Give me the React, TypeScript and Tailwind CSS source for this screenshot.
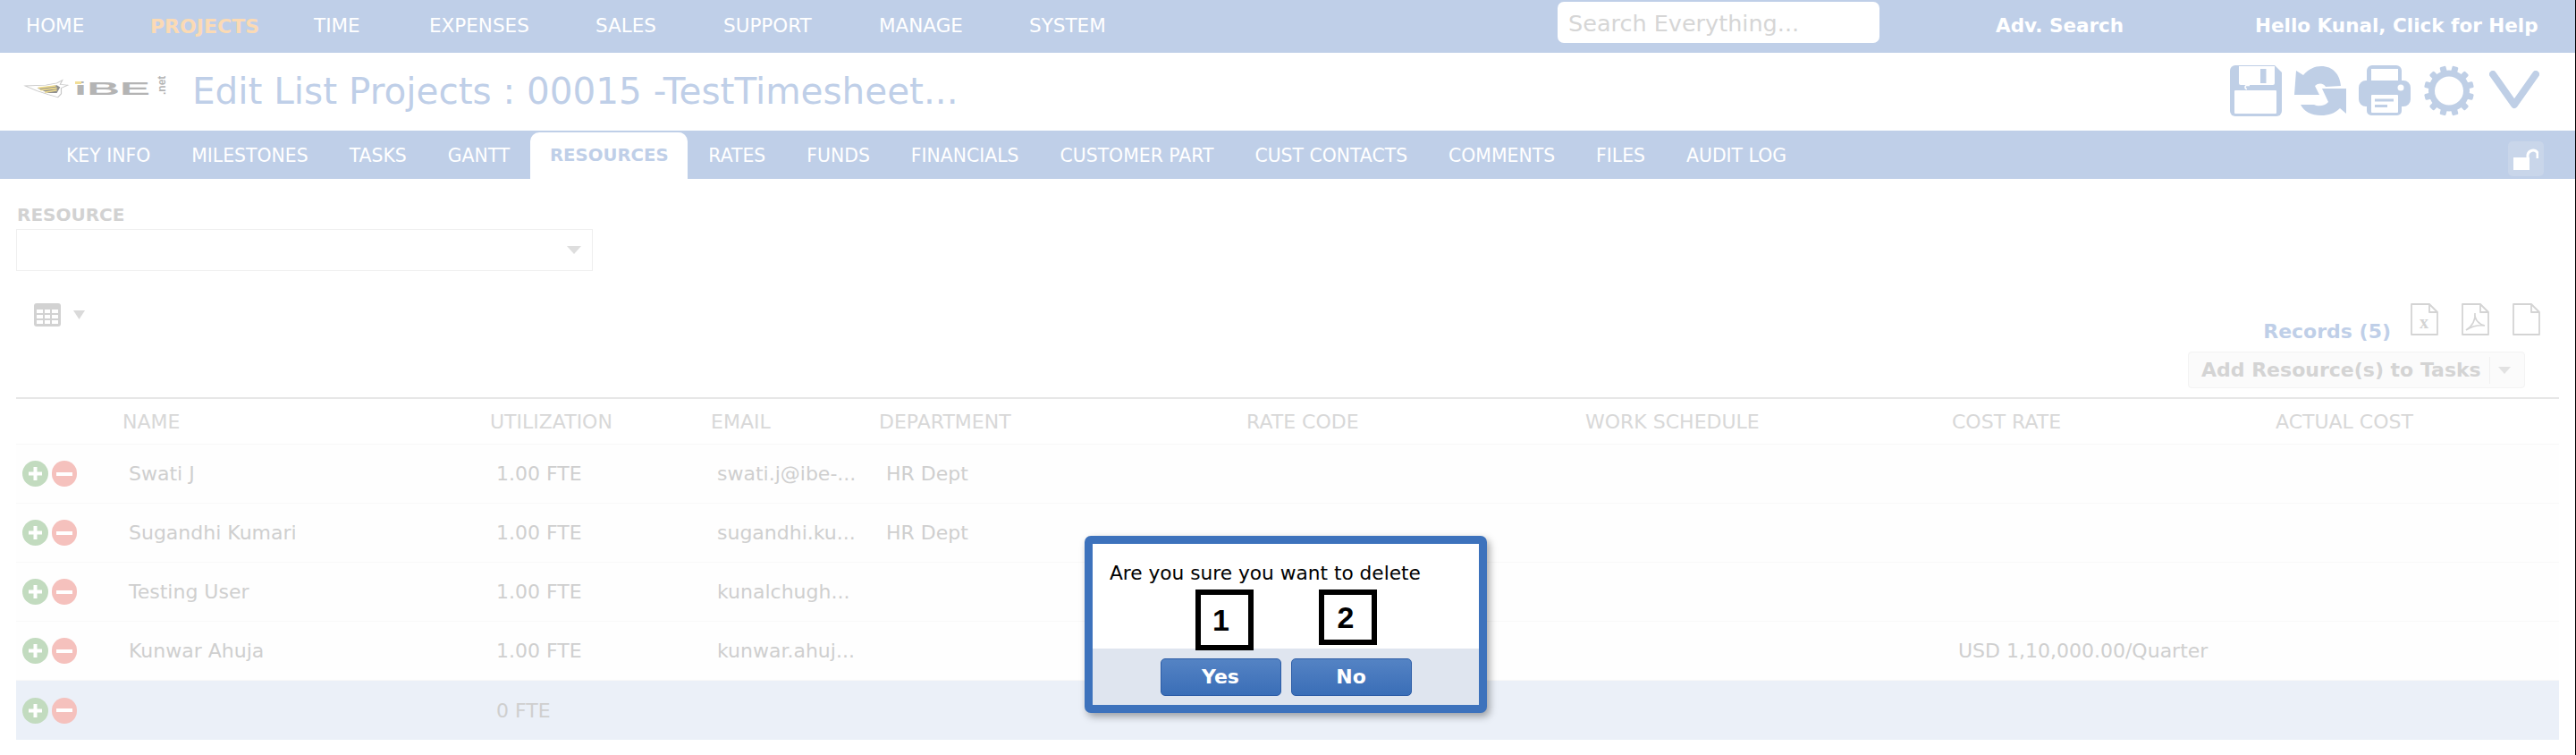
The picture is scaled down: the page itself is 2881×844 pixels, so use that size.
const navItems = [
  { label: "HOME", width: "w-[139px]" },
  { label: "PROJECTS", width: "w-[183px]", active: true },
  { label: "TIME", width: "w-[129px]" },
  { label: "EXPENSES", width: "w-[186px]" },
  { label: "SALES", width: "w-[143px]" },
  { label: "SUPPORT", width: "w-[174px]" },
  { label: "MANAGE", width: "w-[168px]" },
  { label: "SYSTEM", width: "w-[86px]" },
];

const tabs = [
  "KEY INFO",
  "MILESTONES",
  "TASKS",
  "GANTT",
  "RESOURCES",
  "RATES",
  "FUNDS",
  "FINANCIALS",
  "CUSTOMER PART",
  "CUST CONTACTS",
  "COMMENTS",
  "FILES",
  "AUDIT LOG",
];

const columns = ["NAME", "UTILIZATION", "EMAIL", "DEPARTMENT", "RATE CODE", "WORK SCHEDULE", "COST RATE", "ACTUAL COST"];

const rows = [
  { name: "Swati J", util: "1.00 FTE", email: "swati.j@ibe-...", dept: "HR Dept", cost: "" },
  { name: "Sugandhi Kumari", util: "1.00 FTE", email: "sugandhi.ku...", dept: "HR Dept", cost: "" },
  { name: "Testing User", util: "1.00 FTE", email: "kunalchugh...", dept: "", cost: "" },
  { name: "Kunwar Ahuja", util: "1.00 FTE", email: "kunwar.ahuj...", dept: "", cost: "USD 1,10,000.00/Quarter" },
  { name: "", util: "0 FTE", email: "", dept: "", cost: "", selected: true },
];

const gridCols = "grid grid-cols-[119px_411px_247px_188px_411px_379px_410px_362px_1fr]";

function Logo() {
  return (
    <svg width="164" height="30" viewBox="0 0 164 30" className="shrink-0 overflow-visible">
      <g transform="scale(1.22 0.8)">
        <path d="M1 10 L20 9 L30 6 L35 2 L33 8 L40 9 L34 13 L34 21 L31 26 L22 22 L12 17 Z" fill="#fff" stroke="#c9c9c9" strokeWidth="1" />
        <path d="M12 13 L30 9 L33 12 L30 20 L22 20 Z" fill="#8f8f8f" />
        <path d="M13 13 L29 10 M15 16 L30 13 M19 19 L30 16" stroke="#f0dc8c" strokeWidth="2" />
      </g>
      <text transform="translate(56 18) scale(2.43 1)" fontFamily="Liberation Sans" fontWeight="700" fontSize="21" fill="#b4b4b4">iBE</text>
      <rect x="57" y="3" width="7" height="3" fill="#f2de96" />
      <text transform="translate(158 18) rotate(-90)" fontFamily="Liberation Sans" fontWeight="700" fontSize="12" fill="#b4b4b4">.net</text>
    </svg>
  );
}

function SaveIcon() {
  return (
    <svg width="58" height="57" viewBox="0 0 58 57">
      <path d="M6 0 H50 L58 8 V51 a6 6 0 0 1 -6 6 H6 a6 6 0 0 1 -6 -6 V6 a6 6 0 0 1 6 -6 Z" fill="#bfcfe6" />
      <path d="M10 1 H50 V20 a2 2 0 0 1 -2 2 H12 a2 2 0 0 1 -2 -2 Z" fill="#fff" />
      <rect x="34" y="4" width="6.5" height="16" fill="#bfcfe6" />
      <rect x="5" y="28" width="47" height="26" rx="1" fill="#fff" />
      <path d="M22 22.5 H19 a2 2 0 0 0 0 4" stroke="#fff" strokeWidth="1.5" fill="none" />
    </svg>
  );
}

function RefreshIcon() {
  return (
    <svg width="58" height="57" viewBox="0 0 58 57">
      <path d="M2 6 L10 11 C16 4 23 1 30 1 C43 1 51 10 52 23 L35 24 C33 20 27 19 23 23 L28 33 L0 33 Z" fill="#bfcfe6" />
      <path d="M58 26 V54 L51 48 C45 54 38 56 30 56 C19 56 11 52 7 44 L22 44 C26 46 34 46 38 41 L31 26 Z" fill="#bfcfe6" />
    </svg>
  );
}

function PrinterIcon() {
  return (
    <svg width="58" height="57" viewBox="0 0 58 57">
      <path d="M15 0 H42 a6 6 0 0 1 6 6 V18 H9 V6 a6 6 0 0 1 6 -6 Z" fill="#bfcfe6" />
      <rect x="14" y="4" width="30" height="13" fill="#fff" />
      <path d="M8 17 H50 a8 8 0 0 1 8 8 V38 a8 8 0 0 1 -8 8 H48 V51 a5 5 0 0 1 -5 5 H14 a5 5 0 0 1 -5 -5 V46 H8 a8 8 0 0 1 -8 -8 V25 a8 8 0 0 1 8 -8 Z" fill="#bfcfe6" />
      <circle cx="47" cy="25" r="3.5" fill="#fff" />
      <rect x="14" y="33" width="30" height="20" rx="1" fill="#fff" />
      <rect x="18" y="37.5" width="21" height="3" fill="#bfcfe6" />
      <rect x="18" y="44" width="14" height="3" fill="#bfcfe6" />
    </svg>
  );
}

function GearIcon() {
  const teeth = [15, 45, 75, 105, 135, 165, 195, 225, 255, 285, 315, 345];
  return (
    <svg width="58" height="57" viewBox="0 0 58 57">
      <circle cx="29" cy="28.5" r="19.5" fill="none" stroke="#bfcfe6" strokeWidth="7" />
      {teeth.map((angle) => (
        <rect key={angle} x="25.5" y="0.5" width="7" height="9" rx="1.5" fill="#bfcfe6" transform={`rotate(${angle} 29 28.5)`} />
      ))}
    </svg>
  );
}

function ChevronIcon() {
  return (
    <svg width="56" height="45" viewBox="0 0 56 45">
      <path d="M4 4 L28 38 L52 4" fill="none" stroke="#bfcfe6" strokeWidth="8" strokeLinecap="round" strokeLinejoin="round" />
    </svg>
  );
}

function LockIcon() {
  return (
    <div className="w-[40px] h-[39px] rounded-[5px] bg-[#c9d6ea] flex items-center justify-center">
      <svg width="28" height="24" viewBox="0 0 28 24">
        <path d="M17 14 V7 a6 6 0 0 1 11 -2 V11" fill="none" stroke="#fff" strokeWidth="3" transform="translate(-1 0)" />
        <rect x="0" y="10" width="18" height="14" fill="#fff" />
      </svg>
    </div>
  );
}

function DocIcon({ children }: { children?: React.ReactNode }) {
  return (
    <svg width="31" height="36" viewBox="0 0 31 36">
      <path d="M1 1 H21 L30 10 V35 H1 Z M21 1 V10 H30" fill="none" stroke="#d4d4d4" strokeWidth="1.8" strokeLinejoin="round" />
      {children}
    </svg>
  );
}

function RowButtons() {
  return (
    <div className="flex gap-[4px] pl-[7px]">
      <div className="w-[29px] h-[29px] rounded-full bg-[#c2dbbf] flex items-center justify-center">
        <svg width="19" height="19" viewBox="0 0 19 19">
          <path d="M9.5 2 V17 M2 9.5 H17" stroke="#fff" strokeWidth="4" />
        </svg>
      </div>
      <div className="w-[28px] h-[29px] rounded-full bg-[#f5c1bd] flex items-center justify-center">
        <div className="w-[18px] h-[4px] bg-white" />
      </div>
    </div>
  );
}

export default function App() {
  return (
    <div className="relative w-[2881px] h-[844px] overflow-hidden bg-white font-['DejaVu_Sans',sans-serif] border-r border-black">
      {/* top nav */}
      <div className="h-[59px] bg-[#bfcfe8] flex items-center pl-[29px]">
        <div className="flex">
          {navItems.map((item) => (
            <span
              key={item.label}
              className={`${item.width} ${item.active ? "text-[22px] font-bold text-[#fbdab4]" : "text-[21.5px] text-white"}`}
            >
              {item.label}
            </span>
          ))}
        </div>
        <input
          placeholder="Search Everything..."
          className="ml-[505px] mb-[9px] w-[360px] h-[46px] rounded-[7px] bg-white pl-[12px] pt-[2px] text-[25.5px] placeholder:text-[#d6d6d6] font-['DejaVu_Sans',sans-serif]"
        />
        <span className="ml-[130px] w-[143px] text-[21.5px] font-bold text-white whitespace-nowrap">Adv. Search</span>
        <span className="ml-[147px] text-[21.5px] font-bold text-white whitespace-nowrap">Hello Kunal, Click for Help</span>
      </div>

      {/* title row */}
      <div className="h-[87px] flex items-center pl-[27px]">
        <Logo />
        <h1 className="ml-[24px] text-[40.5px] leading-none text-[#bfcfe8]">Edit List Projects : 00015 -TestTimesheet...</h1>
        <div className="ml-auto mr-[40px] flex items-start gap-[14px] pb-[3px]">
          <SaveIcon />
          <RefreshIcon />
          <PrinterIcon />
          <GearIcon />
          <div className="ml-[2px] pt-[6px]">
            <ChevronIcon />
          </div>
        </div>
      </div>

      {/* tab bar */}
      <div className="h-[54px] bg-[#bfcfe8] flex items-end pl-[51px] pr-[35px]">
        {tabs.map((tab) =>
          tab === "RESOURCES" ? (
            <div key={tab} className="h-[52px] w-[176px] rounded-t-[10px] bg-white flex items-center justify-center text-[19.7px] font-bold text-[#bfcfe8]">
              {tab}
            </div>
          ) : (
            <div key={tab} className="h-[52px] px-[23px] flex items-center text-[20.4px] text-white">
              {tab}
            </div>
          ),
        )}
        <div className="ml-auto mb-[3px]">
          <LockIcon />
        </div>
      </div>

      {/* resource picker */}
      <div className="px-[18px]">
        <div className="pt-[28px] pl-[1px] text-[20px] leading-[24px] font-bold text-[#d2d2d2]">RESOURCE</div>
        <div className="mt-[4px] w-[645px] h-[47px] border border-[#efefef] flex items-center justify-end pr-[12px]">
          <svg width="16" height="9" viewBox="0 0 16 9">
            <path d="M0 0 H16 L8 9 Z" fill="#dedede" />
          </svg>
        </div>

        {/* toolbar */}
        <div className="h-[143px] flex justify-between items-start pt-[36px] border-b-2 border-[#e7e7e7]">
          <div className="flex items-center gap-[14px] pl-[20px]">
            <svg width="30" height="26" viewBox="0 0 30 26">
              <rect width="30" height="26" rx="3" fill="#d2d2d2" />
              <g fill="#fff">
                <rect x="3" y="7" width="7" height="4" /><rect x="12" y="7" width="6" height="4" /><rect x="20" y="7" width="7" height="4" />
                <rect x="3" y="13" width="7" height="4" /><rect x="12" y="13" width="6" height="4" /><rect x="20" y="13" width="7" height="4" />
                <rect x="3" y="19" width="7" height="4" /><rect x="12" y="19" width="6" height="4" /><rect x="20" y="19" width="7" height="4" />
              </g>
            </svg>
            <svg width="13" height="10" viewBox="0 0 13 10">
              <path d="M0 0 H13 L6.5 10 Z" fill="#dadada" />
            </svg>
          </div>
          <div className="flex flex-col items-end pr-[21px]">
            <div className="flex items-start">
              <span className="mt-[19px] mb-[2px] mr-[22px] text-[22px] leading-[26px] font-bold text-[#bfcfe8]">Records (5)</span>
              <div className="flex gap-[26px]">
                <DocIcon>
                  <text x="15" y="28" textAnchor="middle" fontFamily="Liberation Serif" fontWeight="700" fontSize="20" fill="#d4d4d4">x</text>
                </DocIcon>
                <DocIcon>
                  <path d="M5 30 C12 26 16 18 15 11 C14 18 20 24 26 25 C18 24 11 26 5 30 Z" fill="none" stroke="#d4d4d4" strokeWidth="1.6" />
                </DocIcon>
                <DocIcon />
              </div>
            </div>
            <div className="mt-[7px] mr-[17px] w-[377px] h-[41px] rounded-[4px] border border-[#f3f3f3] bg-[#fbfbfb] flex items-center pl-[14px]">
              <span className="w-[322px] text-[22px] font-bold text-[#d4d4d4]">Add Resource(s) to Tasks</span>
              <span className="h-[30px] border-l border-[#f0f0f0]" />
              <svg width="14" height="8" viewBox="0 0 14 8" className="ml-[9px]">
                <path d="M0 0 H14 L7 8 Z" fill="#e2e2e2" />
              </svg>
            </div>
          </div>
        </div>

        {/* table */}
        <div className={`${gridCols} h-[51px] items-center border-b border-[#f8f8f8] text-[22px] text-[#d8d8d8]`}>
          <div />
          {columns.map((col) => (
            <div key={col}>{col}</div>
          ))}
        </div>
        {rows.map((row, i) => (
          <div
            key={i}
            className={`${gridCols} h-[66px] items-center text-[22px] text-[#cfcfcf] ${
              row.selected ? "bg-[#ebf0f8]" : "border-b border-[#f8f8f8] bg-[#fefefe]"
            }`}
          >
            <RowButtons />
            <div className="pl-[7px]">{row.name}</div>
            <div className="pl-[7px]">{row.util}</div>
            <div className="pl-[7px]">{row.email}</div>
            <div className="pl-[8px]">{row.dept}</div>
            <div />
            <div />
            <div className="pl-[7px] whitespace-nowrap">{row.cost}</div>
            <div />
          </div>
        ))}
      </div>

      {/* delete confirm dialog */}
      <div className="absolute left-[1213px] top-[599px] w-[450px] h-[198px] rounded-[7px] border-[9px] border-[#3d72bc] bg-white shadow-[3px_4px_8px_rgba(0,0,0,0.35)] flex flex-col">
        <div className="h-[117px] pl-[19px] pt-[20px] text-[21.7px] leading-[26px] text-black">Are you sure you want to delete</div>
        <div className="flex-1 bg-[#dfe5ef] flex justify-center gap-[11px] pt-[11px]">
          <button className="w-[135px] h-[42px] rounded-[5px] border border-[#2c5ca6] pb-[2px] bg-gradient-to-b from-[#5483c4] to-[#3a6eb7] text-[22px] font-bold text-white font-['DejaVu_Sans',sans-serif]">Yes</button>
          <button className="w-[135px] h-[42px] rounded-[5px] border border-[#2c5ca6] pb-[2px] bg-gradient-to-b from-[#5483c4] to-[#3a6eb7] text-[22px] font-bold text-white font-['DejaVu_Sans',sans-serif]">No</button>
        </div>
      </div>

      {/* annotation markers */}
      <div className="absolute left-[1337px] top-[659px] w-[65px] h-[68px] border-[6px] border-black bg-white flex items-center justify-center pr-[8px] font-['Liberation_Sans',sans-serif] font-bold text-[34px] text-black">1</div>
      <div className="absolute left-[1475px] top-[659px] w-[65px] h-[62px] border-[6px] border-black bg-white flex items-center justify-center pr-[5px] font-['Liberation_Sans',sans-serif] font-bold text-[34px] text-black">2</div>
    </div>
  );
}
